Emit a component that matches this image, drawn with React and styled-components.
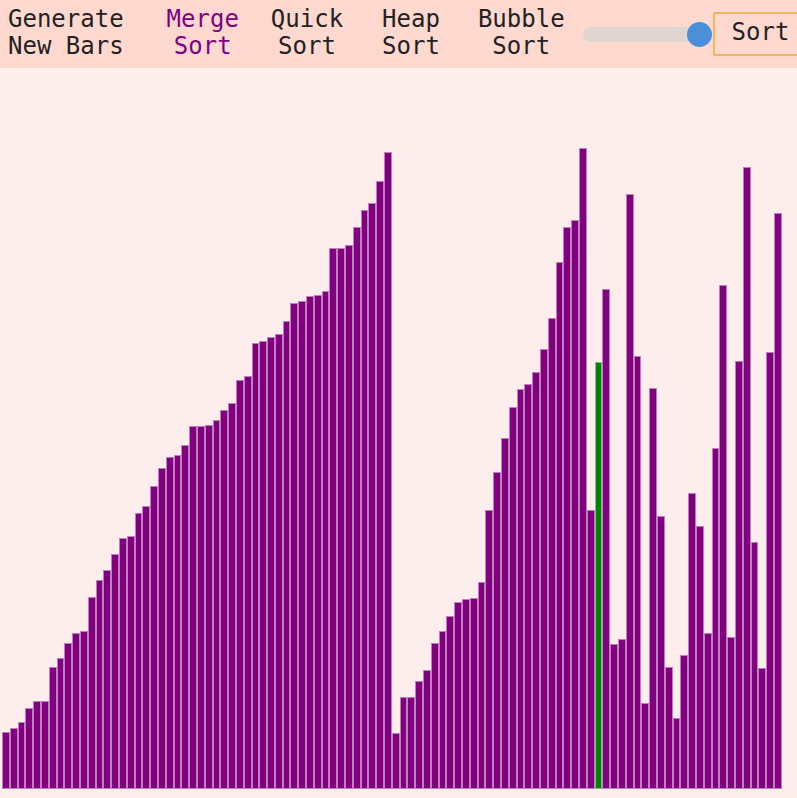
import styled, { createGlobalStyle } from "styled-components";

const GlobalStyle = createGlobalStyle`
  html, body {
    margin: 0;
    padding: 0;
    overflow: hidden;
    background: #fdeeed;
  }
`;

const heights = [
  57, 61, 67, 81, 88, 88, 122, 131, 146, 156, 158, 192, 209, 219, 235, 251,
  253, 276, 283, 303, 321, 332, 334, 344, 363, 363, 364, 369, 379, 386, 409,
  413, 446, 448, 452, 455, 468, 486, 488, 493, 494, 498, 541, 541, 544, 562,
  579, 586, 608, 637, 56, 92, 92, 108, 119, 146, 158, 173, 187, 190, 191, 207,
  279, 317, 351, 382, 400, 405, 417, 440, 471, 527, 562, 569, 641, 279, 427,
  500, 145, 150, 595, 433, 86, 401, 273, 122, 71, 134, 296, 263, 156, 341, 504,
  152, 428, 622, 247, 121, 437, 576,
];

const ACTIVE_BAR = 76;

const menu = [
  { label: "Generate New Bars", gap: 8 },
  { label: "Merge Sort", gap: 43, active: true },
  { label: "Quick Sort", gap: 32 },
  { label: "Heap Sort", gap: 39 },
  { label: "Bubble Sort", gap: 38 },
];

const App = () => {
  return (
    <Page>
      <GlobalStyle />
      <Toolbar>
        {menu.map((item) => (
          <MenuButton key={item.label} $gap={item.gap} $active={item.active}>
            {item.label}
          </MenuButton>
        ))}
        <SpeedSlider type="range" min="5" max="100" defaultValue="100" />
        <SortButton>Sort</SortButton>
      </Toolbar>
      <BarArea>
        {heights.map((h, index) => (
          <Bar
            key={index}
            $active={index === ACTIVE_BAR}
            style={{ height: h }}
          />
        ))}
      </BarArea>
    </Page>
  );
};

const Page = styled.div`
  width: 797px;
  height: 798px;
  background: #fdeeed;
`;

const Toolbar = styled.div`
  display: flex;
  align-items: center;
  height: 68px;
  background: #ffd9d0;
  white-space: nowrap;
`;

const MenuButton = styled.button`
  flex: none;
  width: min-content;
  margin-left: ${(p) => p.$gap}px;
  padding: 0 0 2px;
  border: none;
  background: none;
  font-family: "DejaVu Sans Mono", monospace;
  font-size: 24px;
  line-height: 26.7px;
  text-align: center;
  white-space: normal;
  color: ${(p) => (p.$active ? "#800080" : "#222222")};
  cursor: pointer;
`;

const SpeedSlider = styled.input`
  flex: none;
  appearance: none;
  -webkit-appearance: none;
  width: 129px;
  height: 15px;
  margin: 0 0 0 18px;
  border-radius: 8px;
  background: #e0d5d1;
  outline: none;

  &::-webkit-slider-thumb {
    -webkit-appearance: none;
    width: 25px;
    height: 25px;
    border-radius: 50%;
    background: #4a90d9;
    cursor: pointer;
  }
`;

const SortButton = styled.button`
  flex: none;
  height: 44px;
  margin-left: 1px;
  padding: 0 17px 3px;
  border: 2px solid #f2b45e;
  border-radius: 2px;
  background: transparent;
  font-family: "DejaVu Sans Mono", monospace;
  font-size: 24px;
  line-height: 26.7px;
  color: #222222;
`;

const BarArea = styled.div`
  display: flex;
  align-items: flex-end;
  width: 779px;
  height: 721px;
  padding-left: 2px;
`;

const Bar = styled.div`
  flex: 1 1 0;
  box-sizing: border-box;
  border: 1px solid rgba(255, 255, 255, 0.5);
  background: ${(p) => (p.$active ? "#008000" : "#800080")};
`;

export default App;
